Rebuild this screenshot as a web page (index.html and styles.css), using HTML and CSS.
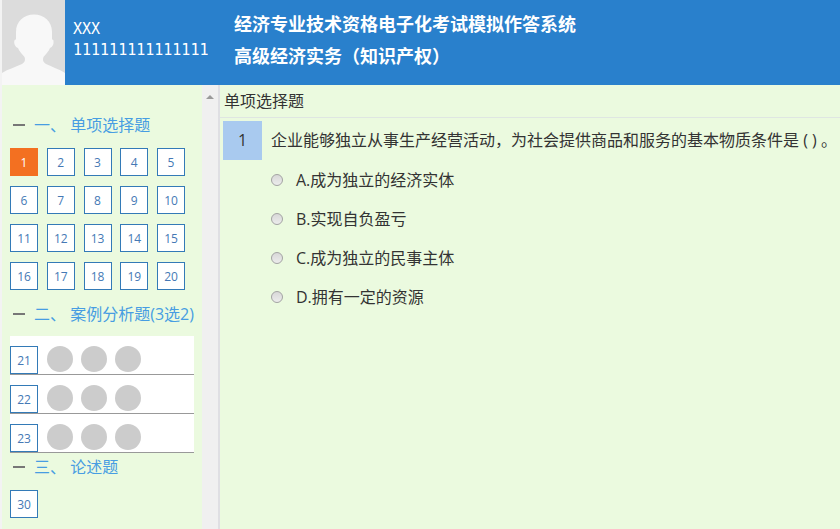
FILE: index.html
```html
<!DOCTYPE html>
<html lang="zh-CN">
<head>
<meta charset="utf-8">
<title>经济专业技术资格电子化考试模拟作答系统</title>
<link rel="stylesheet" href="styles.css">
</head>
<body>

<header class="header">
	<svg class="avatar" viewBox="0 0 63 85" aria-hidden="true">
		<rect width="63" height="85" fill="#dcdcdc"/>
		<path d="M0 85V73C6 69 14 67 20 64C23 62 23.500 60 22.500 57C20 54 17 51 16 48C13 47 11.500 43 12.500 40.500C12.500 39.500 13.500 39.500 14 39.500V32C14 21 22 14.500 32 14.500S50 21 50 32V39.500C51 39.500 51.500 40 51.500 41C52 44 50.500 47 48 48C47 51 44 54 41.500 57C40.500 60 41 62 44 64C50 67 57 69 63 73V85Z" fill="#f8f8f8"/>
	</svg>
	<div class="user">
		<div>XXX</div>
		<div>111111111111111</div>
	</div>
	<div class="title">
		<h1>经济专业技术资格电子化考试模拟作答系统</h1>
		<h2>高级经济实务（知识产权）</h2>
	</div>
</header>

<div class="wrap">
	<nav class="side">
		<h3 class="group"><button class="toggle" aria-label="收起"></button>一、 单项选择题</h3>
		<div class="nums">
			<button class="num on">1</button>
			<button class="num">2</button>
			<button class="num">3</button>
			<button class="num">4</button>
			<button class="num">5</button>
			<button class="num">6</button>
			<button class="num">7</button>
			<button class="num">8</button>
			<button class="num">9</button>
			<button class="num">10</button>
			<button class="num">11</button>
			<button class="num">12</button>
			<button class="num">13</button>
			<button class="num">14</button>
			<button class="num">15</button>
			<button class="num">16</button>
			<button class="num">17</button>
			<button class="num">18</button>
			<button class="num">19</button>
			<button class="num">20</button>
		</div>

		<h3 class="group"><button class="toggle" aria-label="收起"></button>二、 案例分析题(3选2)</h3>
		<div class="cases">
			<div class="case"><button class="num">21</button><span class="dots"><i></i><i></i><i></i></span></div>
			<div class="case"><button class="num">22</button><span class="dots"><i></i><i></i><i></i></span></div>
			<div class="case"><button class="num">23</button><span class="dots"><i></i><i></i><i></i></span></div>
		</div>

		<h3 class="group last"><button class="toggle" aria-label="收起"></button>三、 论述题</h3>
		<div class="nums">
			<button class="num">30</button>
		</div>
	</nav>
	<div class="scroll">
		<svg width="8" height="4" viewBox="0 0 8 4" aria-hidden="true"><path d="M0 4L4 0L8 4Z" fill="#9a9a9a"/></svg>
	</div>

	<main class="main">
		<div class="type">单项选择题</div>
		<div class="question">
			<span class="no">1</span>
			<p>企业能够独立从事生产经营活动，为社会提供商品和服务的基本物质条件是 ( ) 。</p>
		</div>
		<div class="options">
			<label><input type="radio" name="q1" value="A">A.成为独立的经济实体</label>
			<label><input type="radio" name="q1" value="B">B.实现自负盈亏</label>
			<label><input type="radio" name="q1" value="C">C.成为独立的民事主体</label>
			<label><input type="radio" name="q1" value="D">D.拥有一定的资源</label>
		</div>
	</main>
</div>

</body>
</html>
```

FILE: styles.css
```css
* {margin:0; padding:0; box-sizing:border-box;}

body {min-height:100vh; display:flex; flex-direction:column; padding-left:2px; background:#f3f3f3; color:#333; font:16px/24px "Open Sans", "Noto Sans CJK SC", sans-serif;}
button {font-family:inherit; cursor:pointer;}

/* 顶部 */
.header {display:flex; background:#2980cc; color:#fff;}
.avatar {width:63px; height:85px; flex:none;}
.user {padding:19px 0 0 8px; width:161px; font:15px/21px "DejaVu Sans Mono", monospace;}
.title {padding:8px 0 0 8px;}
.title h1, .title h2 {font-size:18px; line-height:32px; font-weight:bold;}

.wrap {flex:1; display:flex; background:#ebfadf;}

/* 左侧题号 */
.side {width:200px; flex:none; padding:28px 8px 10px;}
.group {display:flex; align-items:center; height:24px; color:#479de2; font-size:16px; font-weight:normal; white-space:pre;}
.toggle {width:12px; height:12px; margin:0 9px 0 3px; border:0; background:linear-gradient(#777, #777) center / 12px 2px no-repeat;}
.nums {display:grid; grid-template-columns:repeat(5, 28px); justify-content:space-between; row-gap:10px; width:175px; padding:11px 0 12px;}
.num {width:28px; height:28px; padding-top:2px; border:1px solid #337ab7; background:#fff; color:#4579b5; font-size:12px; line-height:24px; text-align:center;}
.num.on {border-color:#f37021; background:#f37021; color:#fff;}
.cases {width:184px; margin-top:10px; background:#fff;}
.case {display:flex; gap:9px; padding-top:10px; border-bottom:1px solid #999;}
.dots {display:flex; gap:8px;}
.dots i {width:26px; height:26px; border-radius:50%; background:#ccc;}
.group.last {margin-top:2px;}

.scroll {width:18px; flex:none; padding-top:6px; background:#f0f0f0; border-right:2px solid #dfdfe3; text-align:center; line-height:4px;}

/* 右侧试题 */
.main {flex:1; min-width:0;}
.type {height:33px; padding-left:4px; border-bottom:1px solid #dfe6e2; line-height:32px;}
.question {display:flex; gap:9px; padding:3px 0 0 3px; line-height:39px;}
.question p {white-space:nowrap;}
.no {width:39px; height:39px; flex:none; background:#a9caef; text-align:center;}
.options {padding-left:51px;}
.options label {display:flex; align-items:center; gap:13px; height:39px;}
.options input {appearance:none; width:12px; height:12px; border:1px solid #a3a3a3; border-radius:50%; background:linear-gradient(#d8d8d8, #ececec);}
.options input:checked {background:radial-gradient(#444 35%, #e6e6e6 40%);}
```
